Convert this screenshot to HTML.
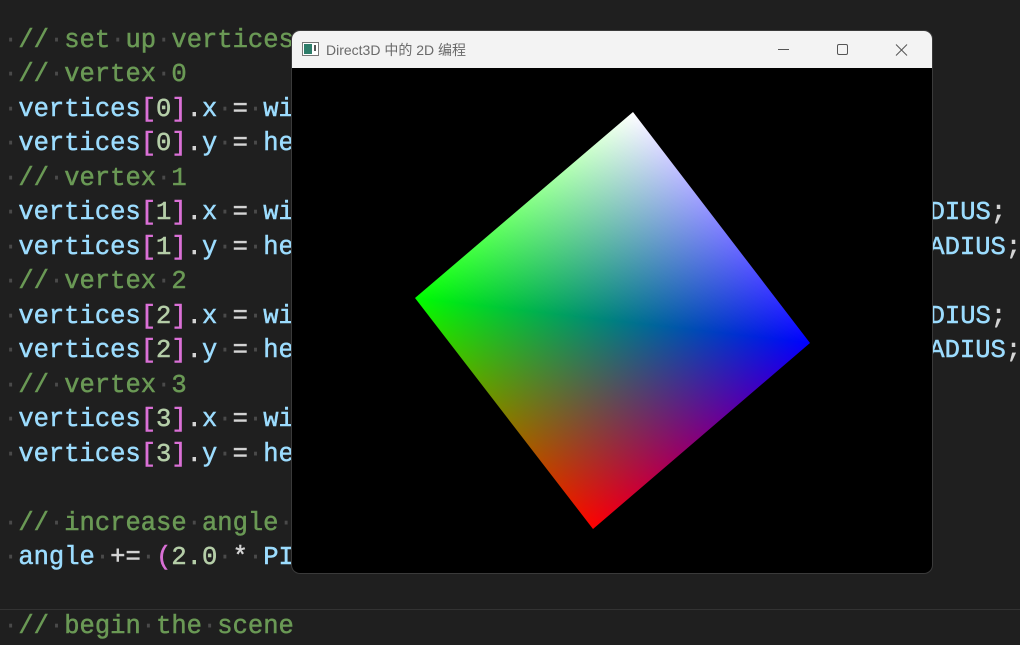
<!DOCTYPE html>
<html><head><meta charset="utf-8">
<style>
html,body{margin:0;padding:0;width:1020px;height:632px;overflow:hidden;background:#1f1f1f;color:#d4d4d4}
.l{position:absolute;left:3px;white-space:pre;font-family:"Liberation Mono",monospace;font-size:25.5px;line-height:34.5px;color:#d4d4d4;-webkit-text-stroke:0.5px currentColor}
.c{color:#6a9955}.v{color:#9cdcfe}.b{color:#da70d6}.n{color:#b5cea8}.o{color:#d4d4d4}.w{color:#4a4a4a;-webkit-text-stroke:0}
.sep{position:absolute;left:0;top:609px;width:1020px;height:1px;background:#333}
.win{position:absolute;left:292px;top:31px;width:640px;height:542px;border-radius:8px;overflow:hidden;background:#000;box-shadow:0 0 0 1px #3a3a3a}
.tb{position:absolute;left:0;top:0;width:640px;height:37px;background:#f3f3f3}
.tt{position:absolute;left:34px;top:9px;font-family:"Liberation Sans","Noto Sans CJK SC",sans-serif;font-size:14px;color:#6a6a6a}
</style></head><body>
<div class="l" style="top:24px"><span class="w">·</span><span class="c">//<span class="w">·</span>set<span class="w">·</span>up<span class="w">·</span>vertices</span></div>
<div class="l" style="top:58px"><span class="w">·</span><span class="c">//<span class="w">·</span>vertex<span class="w">·</span>0</span></div>
<div class="l" style="top:93px"><span class="w">·</span><span class="v">vertices</span><span class="b">[</span><span class="n">0</span><span class="b">]</span>.<span class="v">x</span><span class="w">·</span>=<span class="w">·</span><span class="v">width</span></div>
<div class="l" style="top:127px"><span class="w">·</span><span class="v">vertices</span><span class="b">[</span><span class="n">0</span><span class="b">]</span>.<span class="v">y</span><span class="w">·</span>=<span class="w">·</span><span class="v">height</span></div>
<div class="l" style="top:162px"><span class="w">·</span><span class="c">//<span class="w">·</span>vertex<span class="w">·</span>1</span></div>
<div class="l" style="top:196px"><span class="w">·</span><span class="v">vertices</span><span class="b">[</span><span class="n">1</span><span class="b">]</span>.<span class="v">x</span><span class="w">·</span>=<span class="w">·</span><span class="v">width</span></div>
<div class="l" style="top:231px"><span class="w">·</span><span class="v">vertices</span><span class="b">[</span><span class="n">1</span><span class="b">]</span>.<span class="v">y</span><span class="w">·</span>=<span class="w">·</span><span class="v">height</span></div>
<div class="l" style="top:265px"><span class="w">·</span><span class="c">//<span class="w">·</span>vertex<span class="w">·</span>2</span></div>
<div class="l" style="top:300px"><span class="w">·</span><span class="v">vertices</span><span class="b">[</span><span class="n">2</span><span class="b">]</span>.<span class="v">x</span><span class="w">·</span>=<span class="w">·</span><span class="v">width</span></div>
<div class="l" style="top:334px"><span class="w">·</span><span class="v">vertices</span><span class="b">[</span><span class="n">2</span><span class="b">]</span>.<span class="v">y</span><span class="w">·</span>=<span class="w">·</span><span class="v">height</span></div>
<div class="l" style="top:369px"><span class="w">·</span><span class="c">//<span class="w">·</span>vertex<span class="w">·</span>3</span></div>
<div class="l" style="top:403px"><span class="w">·</span><span class="v">vertices</span><span class="b">[</span><span class="n">3</span><span class="b">]</span>.<span class="v">x</span><span class="w">·</span>=<span class="w">·</span><span class="v">width</span></div>
<div class="l" style="top:438px"><span class="w">·</span><span class="v">vertices</span><span class="b">[</span><span class="n">3</span><span class="b">]</span>.<span class="v">y</span><span class="w">·</span>=<span class="w">·</span><span class="v">height</span></div>
<div class="l" style="top:507px"><span class="w">·</span><span class="c">//<span class="w">·</span>increase<span class="w">·</span>angle<span class="w">·</span>by</span></div>
<div class="l" style="top:541px"><span class="w">·</span><span class="v">angle</span><span class="w">·</span>+=<span class="w">·</span><span class="b">(</span><span class="n">2.0</span><span class="w">·</span>*<span class="w">·</span><span class="v">PI</span></div>
<div class="l" style="top:610px"><span class="w">·</span><span class="c">//<span class="w">·</span>begin<span class="w">·</span>the<span class="w">·</span>scene</span></div>
<div class="l v" style="top:196px;left:899px">RADIUS<span class="o">;</span></div>
<div class="l v" style="top:231px;left:914px">RADIUS<span class="o">;</span></div>
<div class="l v" style="top:300px;left:899px">RADIUS<span class="o">;</span></div>
<div class="l v" style="top:334px;left:914px">RADIUS<span class="o">;</span></div>
<div class="sep"></div>
<div class="win">
<div class="tb">
<svg style="position:absolute;left:10px;top:10px" width="18" height="16" viewBox="0 0 18 16"><rect x="0.5" y="1.5" width="16" height="13" fill="#fff" stroke="#777"/><rect x="2" y="3" width="8" height="10" fill="#2e7d6a"/><rect x="12" y="4" width="2" height="6" fill="#555"/></svg>
<div class="tt">Direct3D 中的 2D 编程</div>
<svg style="position:absolute;left:486px;top:11px" width="130" height="16" viewBox="0 0 130 16"><line x1="0" y1="7.5" x2="11" y2="7.5" stroke="#555" stroke-width="1"/><rect x="59.5" y="2.5" width="10" height="10" rx="1.5" fill="none" stroke="#555"/><path d="M118 2.5 L129 13.5 M129 2.5 L118 13.5" stroke="#555" stroke-width="1"/></svg>
</div>
<svg style="position:absolute;left:-292px;top:-31px" width="1020" height="632" viewBox="0 0 1020 632">
<defs>
<linearGradient id="a1" gradientUnits="userSpaceOnUse" x1="633" y1="112" x2="609.3" y2="320.1"><stop offset="0" stop-color="#fff"/><stop offset="1" stop-color="#000"/></linearGradient>
<linearGradient id="a2" gradientUnits="userSpaceOnUse" x1="415" y1="298" x2="642.2" y2="123.9"><stop offset="0" stop-color="#0f0"/><stop offset="1" stop-color="#000"/></linearGradient>
<linearGradient id="a3" gradientUnits="userSpaceOnUse" x1="810" y1="343" x2="621.4" y2="121.9"><stop offset="0" stop-color="#00f"/><stop offset="1" stop-color="#000"/></linearGradient>
<linearGradient id="b1" gradientUnits="userSpaceOnUse" x1="593" y1="529" x2="616.7" y2="321"><stop offset="0" stop-color="#f00"/><stop offset="1" stop-color="#000"/></linearGradient>
<linearGradient id="b2" gradientUnits="userSpaceOnUse" x1="415" y1="298" x2="604.5" y2="519.1"><stop offset="0" stop-color="#0f0"/><stop offset="1" stop-color="#000"/></linearGradient>
<linearGradient id="b3" gradientUnits="userSpaceOnUse" x1="810" y1="343" x2="583.9" y2="517.2"><stop offset="0" stop-color="#00f"/><stop offset="1" stop-color="#000"/></linearGradient>
</defs>
<g style="isolation:isolate">
<path d="M633 112 L415 298 L810 343Z" fill="url(#a1)" style="mix-blend-mode:plus-lighter"/>
<path d="M633 112 L415 298 L810 343Z" fill="url(#a2)" style="mix-blend-mode:plus-lighter"/>
<path d="M633 112 L415 298 L810 343Z" fill="url(#a3)" style="mix-blend-mode:plus-lighter"/>
<path d="M593 529 L415 298 L810 343Z" fill="url(#b1)" style="mix-blend-mode:plus-lighter"/>
<path d="M593 529 L415 298 L810 343Z" fill="url(#b2)" style="mix-blend-mode:plus-lighter"/>
<path d="M593 529 L415 298 L810 343Z" fill="url(#b3)" style="mix-blend-mode:plus-lighter"/>
</g>
</svg>
</div>
</body></html>
